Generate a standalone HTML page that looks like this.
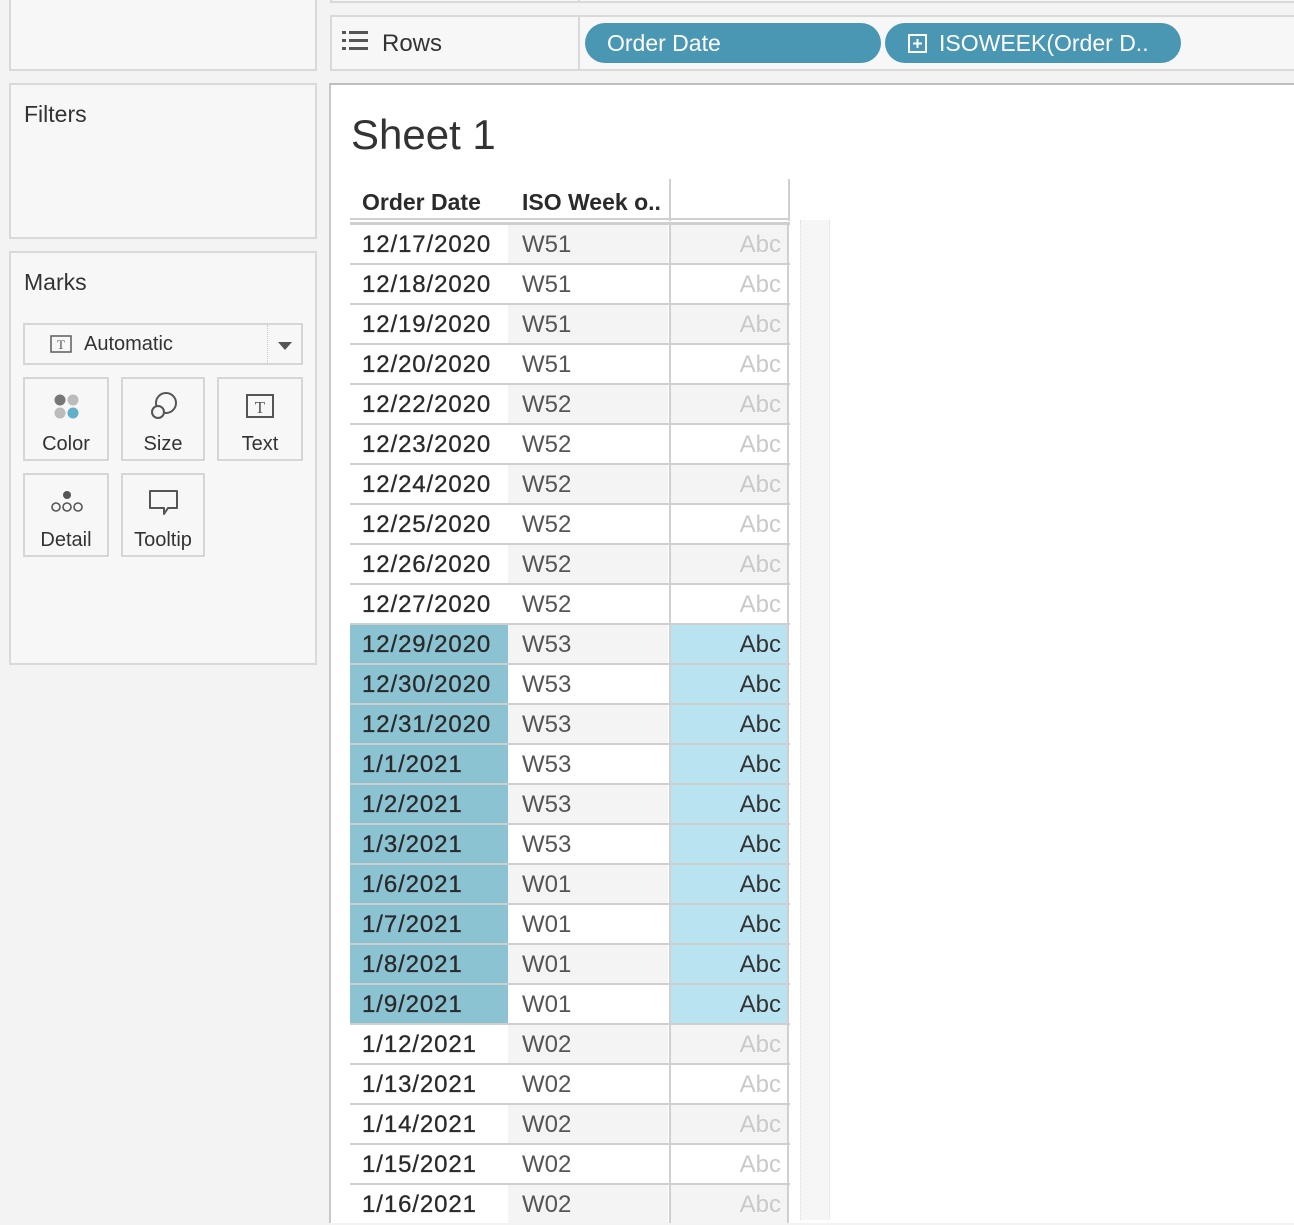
<!DOCTYPE html>
<html><head><meta charset="utf-8"><style>
*{margin:0;padding:0;box-sizing:border-box}
body{width:1294px;height:1220px;background:#f3f3f3;font-family:"Liberation Sans",sans-serif;position:relative;overflow:hidden;color:#333}
.abs{position:absolute}
.panel{position:absolute;background:#f7f7f7;border:2px solid #d9d9d9}
.card{position:absolute;background:#f7f7f7;border:2px solid #d6d6d6;text-align:center;font-size:20px;color:#333}
.card span{position:absolute;left:0;right:0;bottom:3px}
.pill{position:absolute;top:23px;height:40px;border-radius:20px;background:#4a97b3;color:#fff;font-size:23px;line-height:40px}
.row{position:absolute;left:350px;width:440px;height:40px;border-top:2px solid #cfcfcf}
.c{position:absolute;top:0;height:38px;line-height:40px;font-size:24px}
.d{left:0;width:158px;padding-left:12px;color:#2a2a2a;background:#fff;letter-spacing:0.9px;-webkit-text-stroke:0.3px #2a2a2a}
.w{left:158px;width:160px;padding-left:14px;color:#555}
.a{left:319px;width:120px;text-align:right;padding-right:6px;color:#c9c9c9;border-left:2px solid #d0d0d0;border-right:2px solid #d0d0d0}
.g .w,.g .a{background:#f4f4f4}
.o .w,.o .a{background:#fff}
.h .d{background:#8bc3d3}
.h .a{background:#bae3f1;color:#333}
</style></head><body>
<div class="panel" style="left:9px;top:-4px;width:308px;height:75px"></div>
<div class="panel" style="left:9px;top:83px;width:308px;height:156px"><div class="abs" style="left:13px;top:16px;font-size:23px;color:#333">Filters</div></div>
<div class="panel" style="left:9px;top:251px;width:308px;height:414px">
<div class="abs" style="left:13px;top:16px;font-size:23px;color:#333">Marks</div>
</div>
<div class="abs" style="left:23px;top:323px;width:280px;height:42px;border:2px solid #d6d6d6;background:#f7f7f7">
<svg class="abs" style="left:25px;top:10px" width="22" height="18"><rect x="1" y="1" width="20" height="16" fill="none" stroke="#666" stroke-width="1.6"/><text x="11" y="14" font-size="13" text-anchor="middle" fill="#555" font-family="Liberation Serif">T</text></svg>
<div class="abs" style="left:59px;top:8px;font-size:20px;color:#333">Automatic</div>
<div class="abs" style="left:242px;top:0;height:38px;border-left:1px dotted #ccc"></div>
<div class="abs" style="left:253px;top:17px;width:0;height:0;border-left:7px solid transparent;border-right:7px solid transparent;border-top:8px solid #555"></div>
</div>
<div class="card" style="left:23px;top:377px;width:86px;height:84px">
<svg class="abs" style="left:27px;top:13px" width="30" height="30"><circle cx="8" cy="8" r="5.5" fill="#777"/><circle cx="21" cy="8" r="5.5" fill="#bbb"/><circle cx="8" cy="21" r="5.5" fill="#bbb"/><circle cx="21" cy="21" r="5.5" fill="#5fb0c8"/></svg><span>Color</span></div>
<div class="card" style="left:121px;top:377px;width:84px;height:84px">
<svg class="abs" style="left:25px;top:11px" width="32" height="32"><circle cx="18" cy="13" r="10" fill="none" stroke="#555" stroke-width="2"/><circle cx="10" cy="22" r="6" fill="#f7f7f7" stroke="#555" stroke-width="2"/></svg><span>Size</span></div>
<div class="card" style="left:217px;top:377px;width:86px;height:84px">
<svg class="abs" style="left:27px;top:15px" width="30" height="26"><rect x="1" y="1" width="26" height="22" fill="none" stroke="#555" stroke-width="2"/><text x="14" y="19" font-size="17" text-anchor="middle" fill="#555" font-family="Liberation Serif">T</text></svg><span>Text</span></div>
<div class="card" style="left:23px;top:473px;width:86px;height:84px">
<svg class="abs" style="left:24px;top:14px" width="36" height="26"><circle cx="18" cy="6" r="4" fill="#555"/><circle cx="7" cy="18" r="4" fill="none" stroke="#555" stroke-width="1.6"/><circle cx="18" cy="18" r="4" fill="none" stroke="#555" stroke-width="1.6"/><circle cx="29" cy="18" r="4" fill="none" stroke="#555" stroke-width="1.6"/></svg><span>Detail</span></div>
<div class="card" style="left:121px;top:473px;width:84px;height:84px">
<svg class="abs" style="left:25px;top:14px" width="32" height="30"><path d="M2 2 H29 V19 H20 L16 25 V19 H2 Z" fill="none" stroke="#555" stroke-width="2" stroke-linejoin="round"/></svg><span>Tooltip</span></div>

<div class="abs" style="left:330px;top:-4px;width:970px;height:7px;border:2px solid #d9d9d9;background:#f7f7f7"></div>
<div class="abs" style="left:578px;top:-4px;height:7px;border-left:2px solid #d9d9d9"></div>
<div class="abs" style="left:330px;top:15px;width:970px;height:56px;border:2px solid #d9d9d9;background:#f7f7f7"></div>
<div class="abs" style="left:578px;top:15px;height:56px;border-left:2px solid #d9d9d9"></div>
<svg class="abs" style="left:342px;top:31px" width="26" height="22"><g fill="#555"><rect x="0" y="0" width="4" height="3"/><rect x="7" y="0" width="19" height="3"/><rect x="0" y="8" width="4" height="3"/><rect x="7" y="8" width="19" height="3"/><rect x="0" y="16" width="4" height="3"/><rect x="7" y="16" width="19" height="3"/></g></svg>
<div class="abs" style="left:382px;top:30px;font-size:24px;color:#333">Rows</div>
<div class="pill" style="left:585px;width:296px;padding-left:22px">Order Date</div>
<div class="pill" style="left:885px;width:296px;padding-left:54px">ISOWEEK(Order D..</div>
<svg class="abs" style="left:908px;top:34px" width="20" height="20"><rect x="1" y="1" width="17" height="17" fill="none" stroke="#fff" stroke-width="2"/><path d="M9.5 5V14M5 9.5H14" stroke="#fff" stroke-width="2"/></svg>

<div class="abs" style="left:329px;top:83px;width:970px;height:1140px;background:#fff;border-top:2px solid #bdbdbd;border-left:2px solid #c8c8c8"></div>
<div class="abs" style="left:351px;top:111px;font-size:42px;color:#333">Sheet 1</div>
<div class="abs" style="left:362px;top:189px;font-size:23px;font-weight:bold;color:#2a2a2a">Order Date</div>
<div class="abs" style="left:522px;top:189px;font-size:23px;font-weight:bold;color:#2a2a2a">ISO Week o..</div>
<div class="abs" style="left:669px;top:179px;height:42px;border-left:2px solid #d0d0d0"></div>
<div class="abs" style="left:788px;top:179px;height:42px;border-left:2px solid #d0d0d0"></div>
<div class="abs" style="left:350px;top:218px;width:440px;height:6px;border-top:2px solid #cfcfcf;border-bottom:2px solid #cfcfcf"></div>
<div class="abs" style="left:800px;top:220px;width:30px;height:1000px;background:#f6f6f6;border-left:1px dotted #ddd;border-right:1px dotted #ddd"></div>

<div class="row g" style="top:223px"><div class="c d">12/17/2020</div><div class="c w">W51</div><div class="c a">Abc</div></div>
<div class="row o" style="top:263px"><div class="c d">12/18/2020</div><div class="c w">W51</div><div class="c a">Abc</div></div>
<div class="row g" style="top:303px"><div class="c d">12/19/2020</div><div class="c w">W51</div><div class="c a">Abc</div></div>
<div class="row o" style="top:343px"><div class="c d">12/20/2020</div><div class="c w">W51</div><div class="c a">Abc</div></div>
<div class="row g" style="top:383px"><div class="c d">12/22/2020</div><div class="c w">W52</div><div class="c a">Abc</div></div>
<div class="row o" style="top:423px"><div class="c d">12/23/2020</div><div class="c w">W52</div><div class="c a">Abc</div></div>
<div class="row g" style="top:463px"><div class="c d">12/24/2020</div><div class="c w">W52</div><div class="c a">Abc</div></div>
<div class="row o" style="top:503px"><div class="c d">12/25/2020</div><div class="c w">W52</div><div class="c a">Abc</div></div>
<div class="row g" style="top:543px"><div class="c d">12/26/2020</div><div class="c w">W52</div><div class="c a">Abc</div></div>
<div class="row o" style="top:583px"><div class="c d">12/27/2020</div><div class="c w">W52</div><div class="c a">Abc</div></div>
<div class="row g h" style="top:623px"><div class="c d">12/29/2020</div><div class="c w">W53</div><div class="c a">Abc</div></div>
<div class="row o h" style="top:663px"><div class="c d">12/30/2020</div><div class="c w">W53</div><div class="c a">Abc</div></div>
<div class="row g h" style="top:703px"><div class="c d">12/31/2020</div><div class="c w">W53</div><div class="c a">Abc</div></div>
<div class="row o h" style="top:743px"><div class="c d">1/1/2021</div><div class="c w">W53</div><div class="c a">Abc</div></div>
<div class="row g h" style="top:783px"><div class="c d">1/2/2021</div><div class="c w">W53</div><div class="c a">Abc</div></div>
<div class="row o h" style="top:823px"><div class="c d">1/3/2021</div><div class="c w">W53</div><div class="c a">Abc</div></div>
<div class="row g h" style="top:863px"><div class="c d">1/6/2021</div><div class="c w">W01</div><div class="c a">Abc</div></div>
<div class="row o h" style="top:903px"><div class="c d">1/7/2021</div><div class="c w">W01</div><div class="c a">Abc</div></div>
<div class="row g h" style="top:943px"><div class="c d">1/8/2021</div><div class="c w">W01</div><div class="c a">Abc</div></div>
<div class="row o h" style="top:983px"><div class="c d">1/9/2021</div><div class="c w">W01</div><div class="c a">Abc</div></div>
<div class="row g" style="top:1023px"><div class="c d">1/12/2021</div><div class="c w">W02</div><div class="c a">Abc</div></div>
<div class="row o" style="top:1063px"><div class="c d">1/13/2021</div><div class="c w">W02</div><div class="c a">Abc</div></div>
<div class="row g" style="top:1103px"><div class="c d">1/14/2021</div><div class="c w">W02</div><div class="c a">Abc</div></div>
<div class="row o" style="top:1143px"><div class="c d">1/15/2021</div><div class="c w">W02</div><div class="c a">Abc</div></div>
<div class="row g" style="top:1183px"><div class="c d">1/16/2021</div><div class="c w">W02</div><div class="c a">Abc</div></div>
</body></html>
